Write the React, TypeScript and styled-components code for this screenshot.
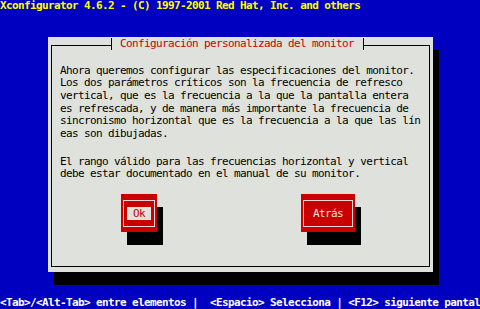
import React from 'react';
import styled, { createGlobalStyle } from 'styled-components';

const GlobalStyle = createGlobalStyle`
  html, body {
    margin: 0;
    padding: 0;
    background: #0000c0;
  }
  * {
    box-sizing: border-box;
  }
`;

const BLUE = '#0000c0';
const GRAY = '#dfe1dd';
const RED = '#c80000';
const PINK = '#f0d6d6';

const Screen = styled.div`
  width: 480px;
  height: 309px;
  display: flex;
  flex-direction: column;
  background: ${BLUE};
  font-family: 'DejaVu Sans Mono', 'Liberation Mono', monospace;
  font-size: 11px;
  letter-spacing: -0.62px;
  overflow: hidden;
`;

const TitleBar = styled.div`
  height: 12px;
  line-height: 12px;
  color: #ffff00;
  font-weight: bold;
  white-space: pre;
`;

const Stage = styled.div`
  flex: 1;
  padding: 25.3px 0 0 48px;
`;

const Dialog = styled.div`
  width: 385px;
  height: 234.4px;
  background: ${GRAY};
  box-shadow: 6px 13px 0 #000;
  padding: 0 3px 5px 3px;
  display: flex;
  flex-direction: column;
`;

const Header = styled.div`
  height: 13px;
  display: flex;
`;

const Corner = styled.div<{ $side: 'left' | 'right' }>`
  margin-top: 7.7px;
  border-top: 1px solid #000;
  ${({ $side }) => ($side === 'left' ? 'width: 60px; border-left: 1px solid #000;' : 'flex: 1; border-right: 1px solid #000;')}
`;

const Tick = styled.div`
  width: 1px;
  margin-top: 0.7px;
  background: #000;
`;

const Caption = styled.div`
  color: ${RED};
  line-height: 13px;
  padding: 0 9px 0 8px;
  white-space: pre;
`;

const Frame = styled.div`
  flex: 1;
  border: 1px solid #000;
  border-top: none;
  padding: 14.6px 0 0 8px;
  display: flex;
  flex-direction: column;
`;

const Message = styled.p<{ $gap?: number }>`
  margin: ${({ $gap }) => $gap ?? 0}px 0 0 0;
  color: #000;
  line-height: 12.6px;
  white-space: pre;
`;

const ButtonRow = styled.div`
  display: flex;
  gap: 144px;
  margin: 12.9px 0 0 61px;
`;

const Button = styled.div<{ $width: number }>`
  width: ${({ $width }) => $width}px;
  height: 38px;
  background: ${RED};
  box-shadow: 6px 13px 0 #000;
  padding: 6px 2px 5px 2px;
  display: flex;
`;

const ButtonFrame = styled.div`
  flex: 1;
  border: 1px solid ${PINK};
  display: flex;
  align-items: center;
  justify-content: center;
`;

const ButtonLabel = styled.span<{ $focused?: boolean }>`
  height: 13.7px;
  line-height: 13.7px;
  padding: 0 6px;
  white-space: pre;
  color: ${({ $focused }) => ($focused ? RED : '#f6e6e6')};
  background: ${({ $focused }) => ($focused ? GRAY : 'transparent')};
`;

const StatusBar = styled.div`
  height: 12.4px;
  line-height: 12.4px;
  color: #ffffff;
  font-weight: bold;
  white-space: pre;
`;

const firstParagraph = [
  'Ahora queremos configurar las especificaciones del monitor.',
  'Los dos parámetros críticos son la frecuencia de refresco',
  'vertical, que es la frecuencia a la que la pantalla entera',
  'es refrescada, y de manera más importante la frecuencia de',
  'sincronismo horizontal que es la frecuencia a la que las lín',
  'eas son dibujadas.',
];

const secondParagraph = [
  'El rango válido para las frecuencias horizontal y vertical',
  'debe estar documentado en el manual de su monitor.',
];

const App: React.FC = () => {
  return (
    <>
      <GlobalStyle />
      <Screen>
        <TitleBar>Xconfigurator 4.6.2 - (C) 1997-2001 Red Hat, Inc. and others</TitleBar>
        <Stage>
          <Dialog>
            <Header>
              <Corner $side="left" />
              <Tick />
              <Caption>Configuración personalizada del monitor</Caption>
              <Tick />
              <Corner $side="right" />
            </Header>
            <Frame>
              <Message>{firstParagraph.join('\n')}</Message>
              <Message $gap={15.4}>{secondParagraph.join('\n')}</Message>
              <ButtonRow>
                <Button $width={36}>
                  <ButtonFrame>
                    <ButtonLabel $focused>Ok</ButtonLabel>
                  </ButtonFrame>
                </Button>
                <Button $width={54}>
                  <ButtonFrame>
                    <ButtonLabel>Atrás</ButtonLabel>
                  </ButtonFrame>
                </Button>
              </ButtonRow>
            </Frame>
          </Dialog>
        </Stage>
        <StatusBar>{'<Tab>/<Alt-Tab> entre elementos |  <Espacio> Selecciona | <F12> siguiente pantal'}</StatusBar>
      </Screen>
    </>
  );
};

export default App;
